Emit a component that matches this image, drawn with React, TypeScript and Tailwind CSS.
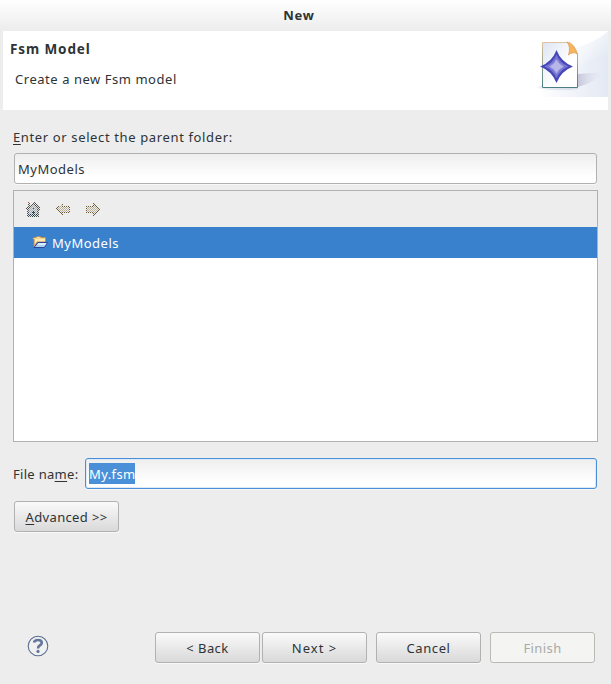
import React from "react";

function Dither({ id }: { id: string }) {
  return (
    <defs>
      <pattern id={id} width="2" height="2" patternUnits="userSpaceOnUse">
        <rect width="1" height="1" fill="#fff" />
        <rect x="1" y="1" width="1" height="1" fill="#fff" />
      </pattern>
      <mask id={id + "-mask"} maskUnits="userSpaceOnUse" x="0" y="0" width="16" height="16">
        <rect width="16" height="16" fill={`url(#${id})`} />
      </mask>
    </defs>
  );
}

function HomeIcon() {
  return (
    <svg width="16" height="16" viewBox="0 0 16 16" shapeRendering="crispEdges">
      <Dither id="home" />
      <path d="M3 7L8 2L13 7V15H3Z" fill="#dde1e4" />
      <g mask="url(#home-mask)">
        <path d="M3 1H5V4L8 1H9L15 7V9H14V16H2V9H1V7L3 5Z" fill="#55504a" />
        <path d="M4 8L8 4L12 8V14H4Z" fill="#a6aeb4" />
        <path d="M7 10H10V16H7Z" fill="#263f43" />
        <path d="M3 13H6V15H3ZM11 13H13V15H11Z" fill="#283f68" />
      </g>
      <path d="M3 1H4V2H3Z" fill="#b05050" />
      <path d="M8 7H9V8H8ZM8 11H9V12H8Z" fill="#356c72" />
    </svg>
  );
}

function ArrowIcon({ forward, id }: { forward?: boolean; id: string }) {
  return (
    <svg width="16" height="16" viewBox="0 0 16 16" shapeRendering="crispEdges">
      <Dither id={id} />
      <g mask={`url(#${id}-mask)`}>
        <g transform={forward ? "translate(16 0) scale(-1 1)" : undefined}>
          <path d="M1.5 8L7.5 2.5V5.5H14.5V11.5H7.5V14Z" fill="#b8b09a" stroke="#6b5a34" />
        </g>
      </g>
    </svg>
  );
}

function FolderIcon() {
  return (
    <svg width="16" height="16" viewBox="0 0 16 16">
      <path d="M2 11.5V4.5L1 3.5L2 2.5H4L5 1.5H8L9 2.5H13.5V6.5H5L2.5 12Z" fill="#f8d68d" stroke="#b98a5e" strokeWidth=".9" />
      <path d="M3 4H13V6.5H5L3 9Z" fill="#ffeab0" />
      <path d="M2 12.5L6 7.5H15.5L12.5 12.5Z" fill="#a9d3f5" stroke="#2b459b" />
      <path d="M6.5 8H14.5L13 10H5Z" fill="#d8efff" />
    </svg>
  );
}

function ModelBanner() {
  return (
    <svg width="78" height="66" viewBox="530 31 78 66">
      <defs>
        <linearGradient id="sweep" gradientUnits="userSpaceOnUse" x1="570" y1="42" x2="608" y2="70">
          <stop offset="0" stopColor="#fff" />
          <stop offset=".45" stopColor="#f1f4f9" />
          <stop offset="1" stopColor="#dce4f1" />
        </linearGradient>
        <linearGradient id="lower" gradientUnits="userSpaceOnUse" x1="536" y1="0" x2="608" y2="0">
          <stop offset="0" stopColor="#fff" />
          <stop offset="1" stopColor="#e3e9f4" />
        </linearGradient>
        <linearGradient id="shade" x1="0" y1="0" x2="1" y2="0">
          <stop offset="0" stopColor="#c6c6da" />
          <stop offset="1" stopColor="#e5e9f3" stopOpacity="0" />
        </linearGradient>
        <linearGradient id="base" x1="0" y1="0" x2="1" y2="0">
          <stop offset="0" stopColor="#eef1f6" />
          <stop offset="1" stopColor="#d6dbe8" />
        </linearGradient>
        <linearGradient id="paper" x1="0" y1="0" x2="1" y2="1">
          <stop offset="0" stopColor="#dde5f3" />
          <stop offset=".6" stopColor="#fff" />
        </linearGradient>
        <linearGradient id="edge" x1="0" y1="0" x2="0" y2="1">
          <stop offset="0" stopColor="#dcc39d" />
          <stop offset="1" stopColor="#497f83" />
        </linearGradient>
      </defs>
      <path d="M608 31Q597 42 571 49L566 97H608Z" fill="url(#sweep)" />
      <path d="M577 68Q589 58 608 54V97H542V88Z" fill="url(#lower)" />
      <path d="M578 74L604 72Q596 82 578 87Z" fill="url(#shade)" />
      <path d="M537 88L542 85H578V89Q556 92 537 88Z" fill="url(#base)" />
      <path d="M542.5 42.5H568L577.5 54V87.5H542.5Z" fill="url(#paper)" stroke="url(#edge)" />
      <path d="M567 42Q574 43 577.5 54Q573 51 568.5 55Q571 47 567 42Z" fill="#f6b45d" stroke="#d99a55" strokeWidth=".7" />
      <path d="M556.5 50Q561 62 573 66.5Q561 71 556.5 83Q552 71 540 66.5Q552 62 556.5 50Z" fill="#4546b8" />
      <path d="M556.5 54.5Q560 63 568.5 66.5Q560 70 556.5 78.5Q553 70 544.5 66.5Q553 63 556.5 54.5Z" fill="#7674d4" />
      <path d="M556.5 59.5Q559 64 563.5 66.5Q559 69 556.5 73.5Q554 69 549.5 66.5Q554 64 556.5 59.5Z" fill="#b7b6e8" stroke="#9b99dd" />
    </svg>
  );
}

function DialogButton({ children, disabled, className = "" }: { children: React.ReactNode; disabled?: boolean; className?: string }) {
  return (
    <button
      disabled={disabled}
      className={`flex h-[31px] w-[105px] shrink-0 items-center justify-center rounded-[3px] border pt-px whitespace-nowrap ${
        disabled
          ? "border-[#b8bab6] bg-[#f4f4f2] text-[#a8aaa8]"
          : "border-[#b0b2b0] bg-linear-to-b from-[#fafafa] to-[#d9d9d9] shadow-[0_1px_0_#f8f8f8]"
      } ${className}`}
    >
      {children}
    </button>
  );
}

export default function App() {
  return (
    <main className="flex h-[684px] w-[611px] flex-col overflow-hidden bg-[#ededed] font-['Noto_Sans',sans-serif] text-[13px] leading-[18px] text-[#2e3436]">
      <header className="flex h-[31px] shrink-0 justify-center bg-linear-to-b from-white to-[#ececec] pt-[6px] pr-[13px] font-bold">
        <span className="tracking-[0.8px]">New</span>
      </header>

      <section className="mr-[3px] ml-[3px] flex h-[79px] shrink-0 justify-between bg-white">
        <div className="pt-[9px] pl-[7px]">
          <h1 className="text-[13.5px] font-bold tracking-[0.9px]">Fsm Model</h1>
          <p className="mt-3 ml-[5px] tracking-[0.54px]">Create a new Fsm model</p>
        </div>
        <ModelBanner />
      </section>

      <section className="flex flex-col px-[13px] pt-[18px]">
        <label className="tracking-[0.63px]"><u className="underline-offset-2">E</u>nter or select the parent folder:</label>
        <div className="mr-[1px] ml-[1px] mt-[7px] flex h-[31px] items-center rounded-[3px] border border-[#b0b2b0] bg-linear-to-b from-[#eeeeee] to-white to-80% pt-px pl-[3px] shadow-[0_1px_0_#f8f8f8]">
          <span className="tracking-[0.5px]">MyModels</span>
        </div>

        <div className="mt-[6px] h-[252px] border border-[#b0b2b0] bg-white">
          <div className="flex h-[36px] items-center gap-[14px] bg-[#ededed] pl-[11px]">
            <HomeIcon />
            <ArrowIcon id="back" />
            <ArrowIcon id="next" forward />
          </div>
          <div className="flex h-[31px] items-center gap-1 bg-[#3a81cd] pl-[18px] text-white">
            <FolderIcon />
            <span className="pt-px tracking-[0.5px]">MyModels</span>
          </div>
        </div>

        <div className="mt-4 mr-[1px] flex h-[31px] items-center">
          <label className="w-[72px] shrink-0 pt-px tracking-[0.3px]">File na<u className="underline-offset-2">m</u>e:</label>
          <div className="flex h-[31px] flex-1 items-center rounded-[3px] border border-[#4a90d9] bg-linear-to-b from-[#eeeeee] to-white to-80% pl-[3px] shadow-[inset_0_0_0_1px_#dce9f6,0_1px_0_#f8f8f8]">
            <span className="flex h-[21px] w-[46px] items-center bg-[#4a90d9] pt-px tracking-[0.4px] text-white">My.fsm</span>
          </div>
        </div>
        <DialogButton className="mt-3 ml-[1px] tracking-[0.35px]"><span><u className="underline-offset-2">A</u>dvanced &gt;&gt;</span></DialogButton>
      </section>

      <footer className="mt-[100px] flex h-[31px] shrink-0 pl-[27px]">
        <svg width="22" height="22" viewBox="0 0 22 22" className="mt-[3px] mr-[106px]" fill="none">
          <circle cx="11" cy="11" r="9.8" fill="#f1f1f2" stroke="#596d91" strokeWidth="1.1" />
          <path d="M7 7.6Q7.5 5 11 5Q14.8 5 14.8 7.8Q14.8 9.3 12.7 10.5Q11 11.5 11 13.6" stroke="#63769b" strokeWidth="2.6" />
          <circle cx="11" cy="16.4" r="1.6" fill="#63769b" />
        </svg>
        <DialogButton className="mr-[2px] tracking-[0.45px]">&lt; Back</DialogButton>
        <DialogButton className="mr-[9px] tracking-[1px]">Next &gt;</DialogButton>
        <DialogButton className="mr-[9px] tracking-[0.6px]">Cancel</DialogButton>
        <DialogButton disabled className="tracking-[0.4px]">Finish</DialogButton>
      </footer>
    </main>
  );
}
